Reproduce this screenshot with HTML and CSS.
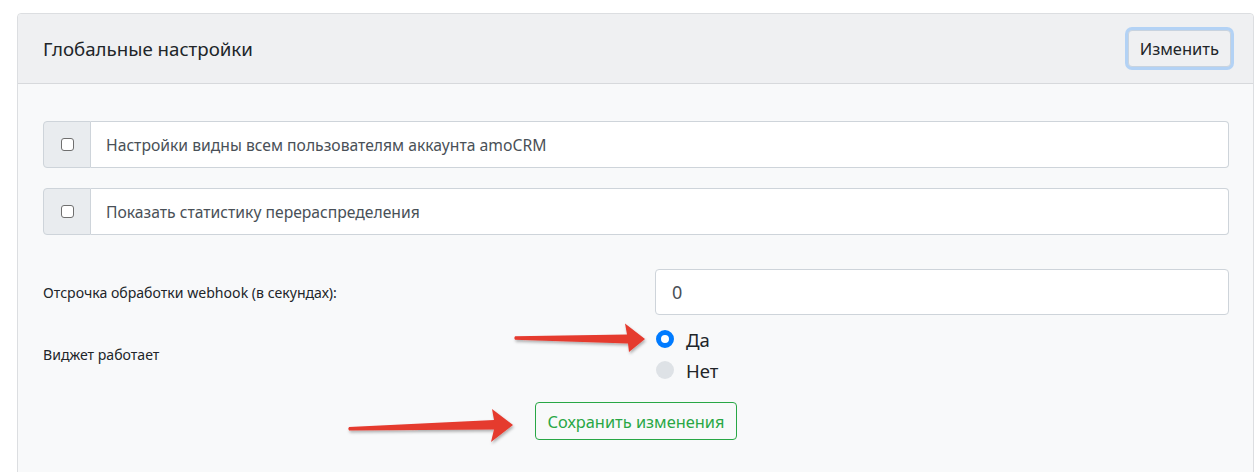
FILE: index.html
```html
<!DOCTYPE html>
<html lang="ru">
<head>
<meta charset="utf-8">
<link rel="stylesheet" href="styles.css">
</head>
<body>
<div class="page">
  <div class="card">
    <div class="card-header">
      <h5 class="title">Глобальные настройки</h5>
      <button class="btn-edit">Изменить</button>
    </div>
    <div class="card-body">
      <div class="input-group">
        <div class="addon"><span class="check"></span></div>
        <div class="field">Настройки видны всем пользователям аккаунта amoCRM</div>
      </div>
      <div class="input-group">
        <div class="addon"><span class="check"></span></div>
        <div class="field">Показать статистику перераспределения</div>
      </div>
      <div class="form-row">
        <div class="label">Отсрочка обработки webhook (в секундах):</div>
        <div class="text-input">0</div>
      </div>
      <div class="form-row radio-row">
        <div class="label">Виджет работает</div>
        <div class="radios">
          <div class="radio"><span class="dot on"></span><span>Да</span></div>
          <div class="radio"><span class="dot"></span><span>Нет</span></div>
        </div>
      </div>
      <div class="actions">
        <button class="btn-save">Сохранить изменения</button>
      </div>
    </div>
  </div>
</div>
<svg class="arrows" width="1258" height="472" viewBox="0 0 1258 472">
  <defs>
    <filter id="sh" x="-10%" y="-50%" width="120%" height="200%">
      <feDropShadow dx="1" dy="2" stdDeviation="1.5" flood-color="#000" flood-opacity="0.3"/>
    </filter>
  </defs>
  <path filter="url(#sh)" fill="#e53a2f" d="M515 336.2 L627 334.5 L625 323.5 L645 339 L629 352 L628 343.5 L515 339.8 Q513.5 338 515 336.2 Z"/>
  <path filter="url(#sh)" fill="#e53a2f" d="M349 427 L494 420 L492 409 L513 425 L491 442 L494 429.5 L349 430.5 Q347.5 428.8 349 427 Z"/>
</svg>
</body>
</html>
```
FILE: styles.css
```css
html, body {
  margin: 0;
  padding: 0;
  background: #ffffff;
  font-family: "Noto Sans", "Liberation Sans", sans-serif;
  color: #212529;
}
.page {
  padding: 13px 4px 0 17px;
}
.card {
  border: 1px solid #dcdee1;
  border-radius: 4px 4px 0 0;
  background: #f8f9fa;
  min-height: 470px;
}
.card-header {
  display: flex;
  align-items: center;
  justify-content: space-between;
  height: 69px;
  padding: 0 22px 0 25px;
  background: #eff0f2;
  border-bottom: 1px solid #d7d9dc;
  border-radius: 4px 4px 0 0;
}
.title {
  margin: 0;
  font-size: 18.7px;
  font-weight: 400;
  color: #212529;
}
.btn-edit {
  font-family: inherit;
  font-size: 16.5px;
  color: #212529;
  background: #eff0f2;
  border: 1px solid #c8d3df;
  border-radius: 4px;
  height: 37px;
  padding: 0 11px;
  box-shadow: 0 0 0 3px #b3d2f5;
  margin-top: 0;
}
.card-body {
  padding: 37px 24px 30px 25px;
}
.input-group {
  display: flex;
  height: 47px;
  margin-bottom: 20px;
}
.addon {
  width: 48px;
  display: flex;
  align-items: center;
  justify-content: center;
  background: #e9ecef;
  border: 1px solid #ced4da;
  border-radius: 4px 0 0 4px;
  box-sizing: border-box;
}
.check {
  width: 11px;
  height: 11px;
  border: 1px solid #6f6f6f;
  border-radius: 3px;
  background: #fff;
  margin-top: -1px;
}
.field {
  flex: 1;
  display: flex;
  align-items: center;
  padding-left: 15px;
  background: #fff;
  border: 1px solid #ced4da;
  border-left: none;
  border-radius: 0 4px 4px 0;
  font-size: 15.7px;
  color: #495057;
}
.form-row {
  display: grid;
  grid-template-columns: 1fr 574px;
  align-items: center;
}
.input-group + .form-row {
  margin-top: 34px;
}
.label {
  font-size: 14.1px;
  color: #212529;
}
.text-input {
  height: 46px;
  box-sizing: border-box;
  display: flex;
  align-items: center;
  padding-left: 16px;
  background: #fff;
  border: 1px solid #ced4da;
  border-radius: 4px;
  font-size: 18px;
  color: #495057;
}
.radio-row {
  margin-top: 12px;
}
.radios {
  display: flex;
  flex-direction: column;
  gap: 7px;
  padding-left: 1px;
}
.radio {
  display: flex;
  align-items: center;
  gap: 12px;
  font-size: 18.5px;
  height: 24px;
  color: #212529;
}
.dot {
  width: 18px;
  height: 18px;
  border-radius: 50%;
  background: #dee2e6;
  box-sizing: border-box;
}
.dot.on {
  background: #fff;
  border: 5px solid #007bff;
}
.actions {
  display: flex;
  justify-content: center;
  margin-top: 20px;
}
.btn-save {
  font-family: inherit;
  font-size: 16.4px;
  color: #28a745;
  background: transparent;
  border: 1px solid #28a745;
  border-radius: 4px;
  height: 38px;
  padding: 0 11px;
}
.arrows {
  position: absolute;
  left: 0;
  top: 0;
  pointer-events: none;
}
```
